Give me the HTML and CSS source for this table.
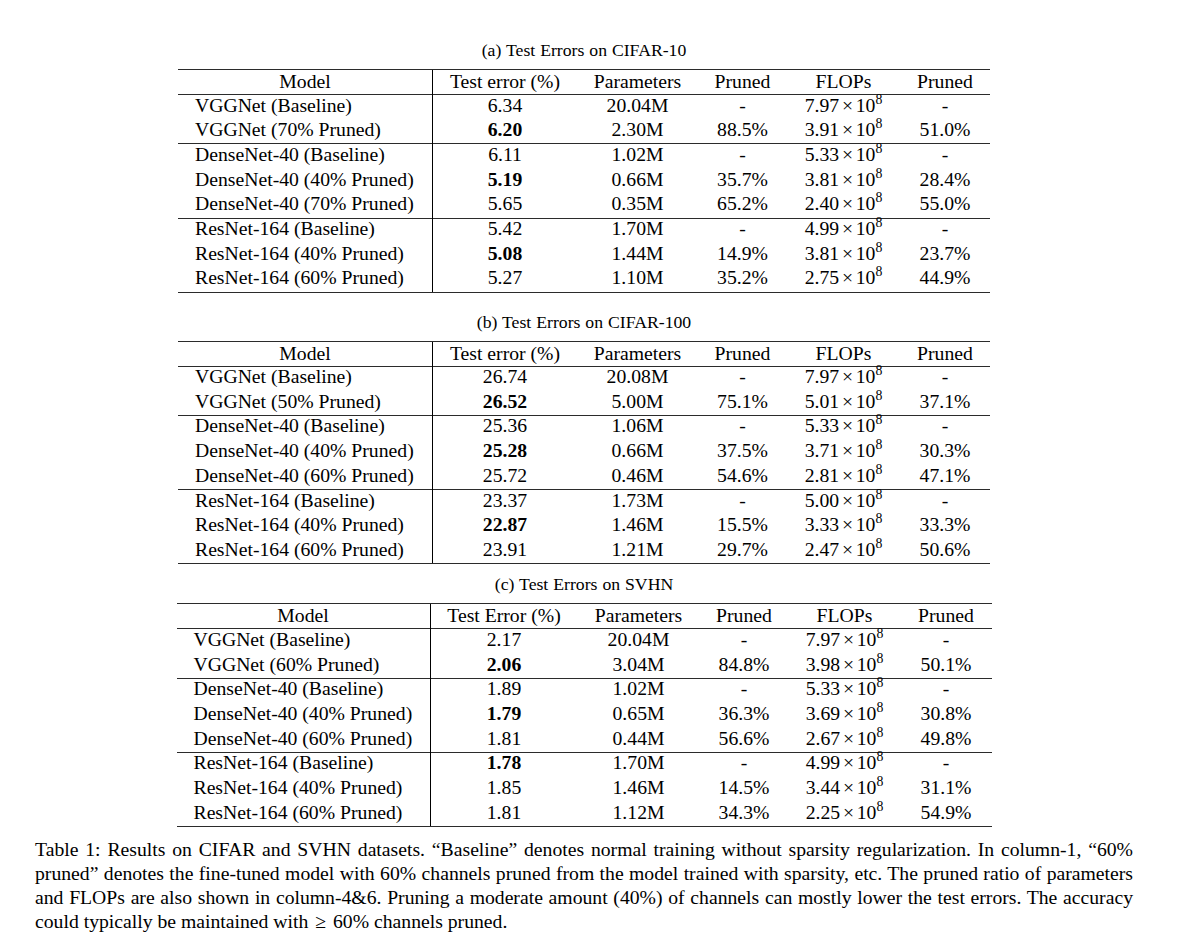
FILE: index.html
```html
<!DOCTYPE html>
<html lang="en">
<head>
<meta charset="utf-8">
<title>Table 1: Results on CIFAR and SVHN datasets</title>
<link rel="stylesheet" href="styles.css">
</head>
<body>
<main class="page">
  <section class="sub sub-a">
    <div class="subcap">(a) Test Errors on CIFAR-10</div>
    <table class="res res-std">
      <colgroup><col class="c1"><col class="c2"><col class="c3"><col class="c4"><col class="c5"><col class="c6"></colgroup>
      <thead>
        <tr><th class="model">Model</th><th>Test error (%)</th><th>Parameters</th><th>Pruned</th><th>FLOPs</th><th>Pruned</th></tr>
      </thead>
      <tbody>
        <tr><td class="model">VGGNet (Baseline)</td><td>6.34</td><td>20.04M</td><td>-</td><td>7.97<span class="x">×</span>10<span class="e">8</span></td><td>-</td></tr>
        <tr><td class="model">VGGNet (70% Pruned)</td><td><b>6.20</b></td><td>2.30M</td><td>88.5%</td><td>3.91<span class="x">×</span>10<span class="e">8</span></td><td>51.0%</td></tr>
        <tr class="grp"><td class="model">DenseNet-40 (Baseline)</td><td>6.11</td><td>1.02M</td><td>-</td><td>5.33<span class="x">×</span>10<span class="e">8</span></td><td>-</td></tr>
        <tr><td class="model">DenseNet-40 (40% Pruned)</td><td><b>5.19</b></td><td>0.66M</td><td>35.7%</td><td>3.81<span class="x">×</span>10<span class="e">8</span></td><td>28.4%</td></tr>
        <tr><td class="model">DenseNet-40 (70% Pruned)</td><td>5.65</td><td>0.35M</td><td>65.2%</td><td>2.40<span class="x">×</span>10<span class="e">8</span></td><td>55.0%</td></tr>
        <tr class="grp"><td class="model">ResNet-164 (Baseline)</td><td>5.42</td><td>1.70M</td><td>-</td><td>4.99<span class="x">×</span>10<span class="e">8</span></td><td>-</td></tr>
        <tr><td class="model">ResNet-164 (40% Pruned)</td><td><b>5.08</b></td><td>1.44M</td><td>14.9%</td><td>3.81<span class="x">×</span>10<span class="e">8</span></td><td>23.7%</td></tr>
        <tr><td class="model">ResNet-164 (60% Pruned)</td><td>5.27</td><td>1.10M</td><td>35.2%</td><td>2.75<span class="x">×</span>10<span class="e">8</span></td><td>44.9%</td></tr>
      </tbody>
    </table>
  </section>

  <section class="sub sub-b">
    <div class="subcap">(b) Test Errors on CIFAR-100</div>
    <table class="res res-std">
      <colgroup><col class="c1"><col class="c2"><col class="c3"><col class="c4"><col class="c5"><col class="c6"></colgroup>
      <thead>
        <tr><th class="model">Model</th><th>Test error (%)</th><th>Parameters</th><th>Pruned</th><th>FLOPs</th><th>Pruned</th></tr>
      </thead>
      <tbody>
        <tr><td class="model">VGGNet (Baseline)</td><td>26.74</td><td>20.08M</td><td>-</td><td>7.97<span class="x">×</span>10<span class="e">8</span></td><td>-</td></tr>
        <tr><td class="model">VGGNet (50% Pruned)</td><td><b>26.52</b></td><td>5.00M</td><td>75.1%</td><td>5.01<span class="x">×</span>10<span class="e">8</span></td><td>37.1%</td></tr>
        <tr class="grp"><td class="model">DenseNet-40 (Baseline)</td><td>25.36</td><td>1.06M</td><td>-</td><td>5.33<span class="x">×</span>10<span class="e">8</span></td><td>-</td></tr>
        <tr><td class="model">DenseNet-40 (40% Pruned)</td><td><b>25.28</b></td><td>0.66M</td><td>37.5%</td><td>3.71<span class="x">×</span>10<span class="e">8</span></td><td>30.3%</td></tr>
        <tr><td class="model">DenseNet-40 (60% Pruned)</td><td>25.72</td><td>0.46M</td><td>54.6%</td><td>2.81<span class="x">×</span>10<span class="e">8</span></td><td>47.1%</td></tr>
        <tr class="grp"><td class="model">ResNet-164 (Baseline)</td><td>23.37</td><td>1.73M</td><td>-</td><td>5.00<span class="x">×</span>10<span class="e">8</span></td><td>-</td></tr>
        <tr><td class="model">ResNet-164 (40% Pruned)</td><td><b>22.87</b></td><td>1.46M</td><td>15.5%</td><td>3.33<span class="x">×</span>10<span class="e">8</span></td><td>33.3%</td></tr>
        <tr><td class="model">ResNet-164 (60% Pruned)</td><td>23.91</td><td>1.21M</td><td>29.7%</td><td>2.47<span class="x">×</span>10<span class="e">8</span></td><td>50.6%</td></tr>
      </tbody>
    </table>
  </section>

  <section class="sub sub-c">
    <div class="subcap">(c) Test Errors on SVHN</div>
    <table class="res res-wide">
      <colgroup><col class="c1"><col class="c2"><col class="c3"><col class="c4"><col class="c5"><col class="c6"></colgroup>
      <thead>
        <tr><th class="model">Model</th><th>Test Error (%)</th><th>Parameters</th><th>Pruned</th><th>FLOPs</th><th>Pruned</th></tr>
      </thead>
      <tbody>
        <tr><td class="model">VGGNet (Baseline)</td><td>2.17</td><td>20.04M</td><td>-</td><td>7.97<span class="x">×</span>10<span class="e">8</span></td><td>-</td></tr>
        <tr><td class="model">VGGNet (60% Pruned)</td><td><b>2.06</b></td><td>3.04M</td><td>84.8%</td><td>3.98<span class="x">×</span>10<span class="e">8</span></td><td>50.1%</td></tr>
        <tr class="grp"><td class="model">DenseNet-40 (Baseline)</td><td>1.89</td><td>1.02M</td><td>-</td><td>5.33<span class="x">×</span>10<span class="e">8</span></td><td>-</td></tr>
        <tr><td class="model">DenseNet-40 (40% Pruned)</td><td><b>1.79</b></td><td>0.65M</td><td>36.3%</td><td>3.69<span class="x">×</span>10<span class="e">8</span></td><td>30.8%</td></tr>
        <tr><td class="model">DenseNet-40 (60% Pruned)</td><td>1.81</td><td>0.44M</td><td>56.6%</td><td>2.67<span class="x">×</span>10<span class="e">8</span></td><td>49.8%</td></tr>
        <tr class="grp"><td class="model">ResNet-164 (Baseline)</td><td><b>1.78</b></td><td>1.70M</td><td>-</td><td>4.99<span class="x">×</span>10<span class="e">8</span></td><td>-</td></tr>
        <tr><td class="model">ResNet-164 (40% Pruned)</td><td>1.85</td><td>1.46M</td><td>14.5%</td><td>3.44<span class="x">×</span>10<span class="e">8</span></td><td>31.1%</td></tr>
        <tr><td class="model">ResNet-164 (60% Pruned)</td><td>1.81</td><td>1.12M</td><td>34.3%</td><td>2.25<span class="x">×</span>10<span class="e">8</span></td><td>54.9%</td></tr>
      </tbody>
    </table>
  </section>

  <p class="caption">
    <span class="ln">Table 1: Results on CIFAR and SVHN datasets. “Baseline” denotes normal training without sparsity regularization. In column-1, “60%</span>
    <span class="ln">pruned” denotes the fine-tuned model with 60% channels pruned from the model trained with sparsity, etc. The pruned ratio of parameters</span>
    <span class="ln">and FLOPs are also shown in column-4&amp;6. Pruning a moderate amount (40%) of channels can mostly lower the test errors. The accuracy</span>
    <span class="ln ln-last">could typically be maintained with <span class="rel">≥</span> 60% channels pruned.</span>
  </p>
</main>
</body>
</html>
```

FILE: styles.css
```css
html, body {
  margin: 0;
  padding: 0;
  background: #ffffff;
}

body {
  color: #000000;
  font-family: "Liberation Serif", "Times New Roman", serif;
}

.page {
  width: 1098px;
  padding: 40px 0 0 35px;
}

.sub-b {
  margin-top: 18.9px;
}

.sub-c {
  margin-top: 10.2px;
}

.subcap {
  font-size: 17.7px;
  line-height: 20px;
  text-align: center;
  margin-bottom: 9px;
  word-spacing: 0.03em;
}

.res {
  margin: 0 auto;
  border-collapse: separate;
  border-spacing: 0;
  table-layout: fixed;
  font-size: 19.7px;
  border-top: 1px solid #2b2b2b;
  border-bottom: 1px solid #2b2b2b;
}

.res-std {
  width: 812px;
}

.res-wide {
  width: 815px;
}

.res-std .c1 { width: 255px; }
.res-std .c2 { width: 144px; }
.res-std .c3 { width: 121px; }
.res-std .c4 { width: 89px; }
.res-std .c5 { width: 113px; }
.res-std .c6 { width: 90px; }

.res-wide .c1 { width: 254px; }
.res-wide .c2 { width: 147px; }
.res-wide .c3 { width: 122px; }
.res-wide .c4 { width: 89px; }
.res-wide .c5 { width: 112px; }
.res-wide .c6 { width: 91px; }

.res th {
  font-weight: normal;
  line-height: 20px;
  padding: 1px 0 3px;
  text-align: center;
  white-space: nowrap;
}

.res td {
  line-height: 20.7px;
  padding: 0.5px 0 3.5px;
  text-align: center;
  white-space: nowrap;
}

.res .model {
  border-right: 1px solid #000000;
}

.res td.model {
  text-align: left;
  padding-left: 17px;
}

.res tbody tr:first-child td,
.res tr.grp td {
  box-shadow: inset 0 1px 0 #2b2b2b;
}

.res b {
  font-weight: bold;
}

.x {
  margin: 0 0.14em;
}

.e {
  font-size: 0.7em;
  vertical-align: 0.57em;
  line-height: 0;
}

.caption {
  margin: 9.9px 0 0;
  font-size: 19.7px;
  line-height: 24px;
}

.ln {
  display: block;
  text-align: justify;
  text-align-last: justify;
}

.ln-last {
  text-align-last: left;
}

.rel {
  margin: 0 0.1em;
}
```
